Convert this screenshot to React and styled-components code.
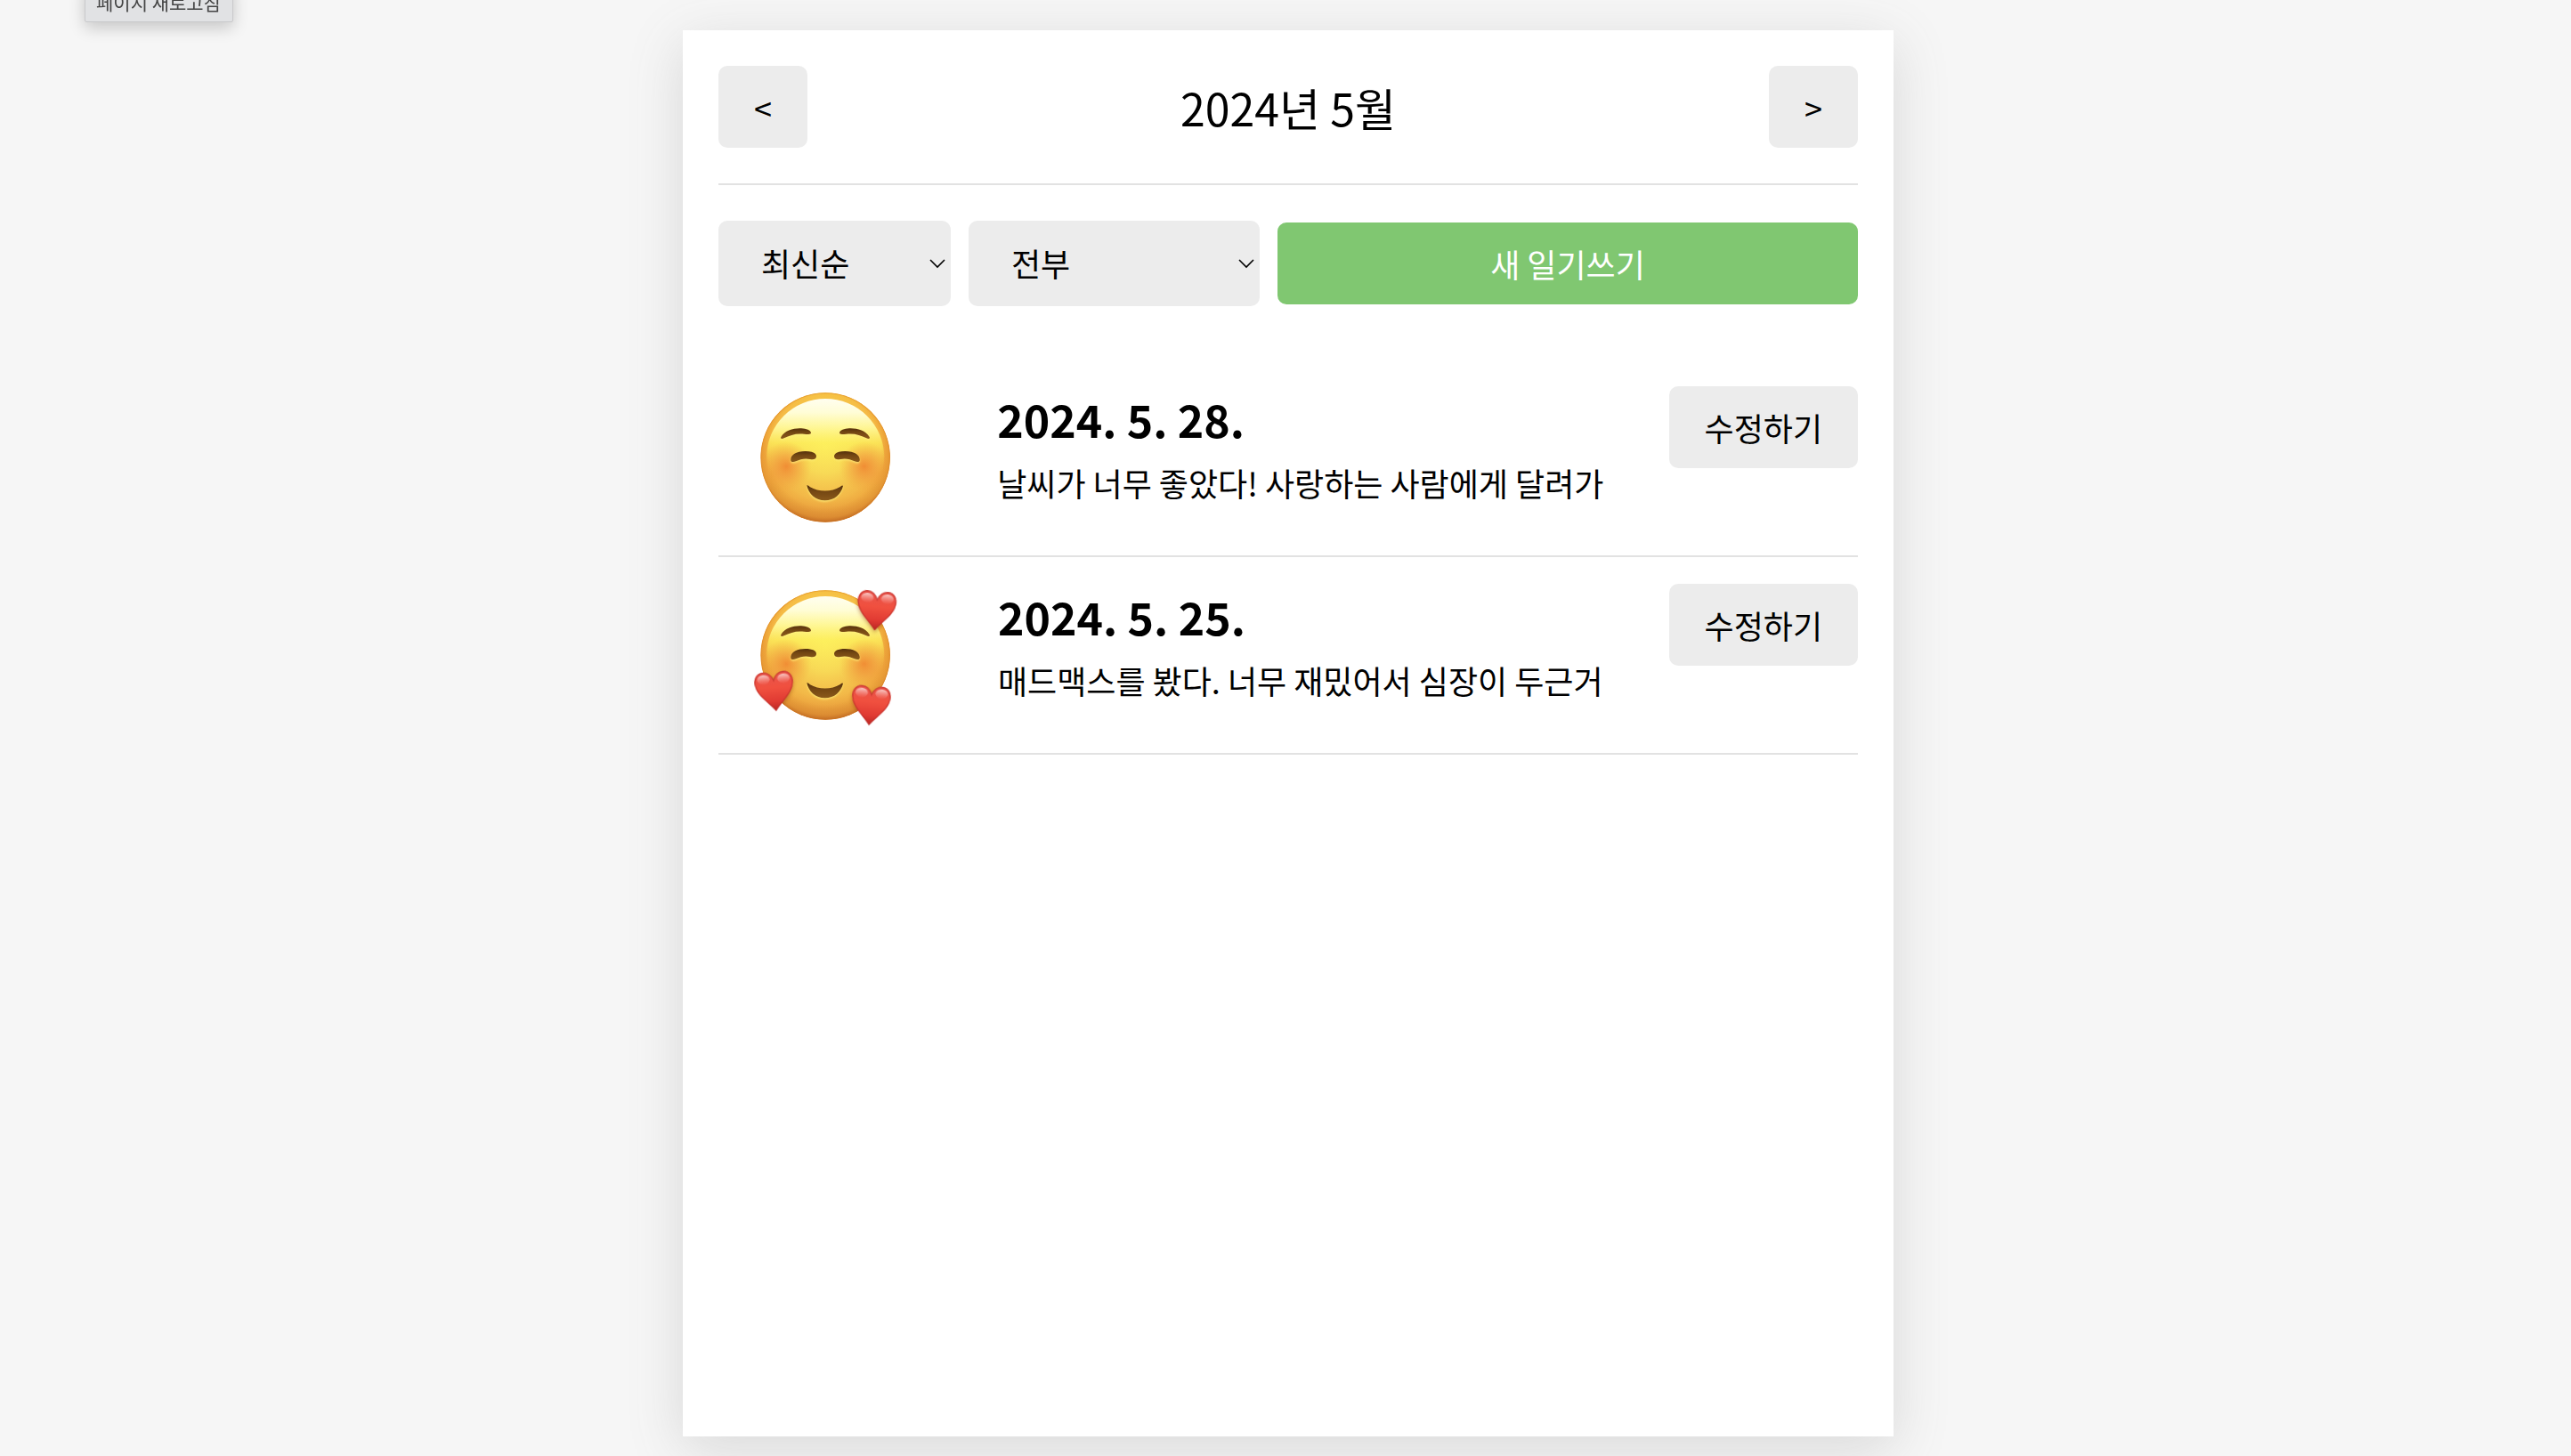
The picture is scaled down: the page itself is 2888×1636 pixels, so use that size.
import React from "react";
import styled, { createGlobalStyle } from "styled-components";

const GlobalStyle = createGlobalStyle`
  *, *::before, *::after { box-sizing: border-box; }
  body {
    margin: 0;
    background: #f6f6f6;
    color: #000;
    font-family: "Noto Sans CJK KR", "Noto Sans", sans-serif;
    font-size: 36px;
    line-height: 52px;
  }
  button, select { font: inherit; }
`;

const Page = styled.div`
  min-height: 100vh;
  display: flex;
  justify-content: center;
  padding: 34px 0 22px 6px;
`;

const Card = styled.main`
  width: 100%;
  max-width: 1360px;
  padding: 0 40px;
  background: #fff;
  box-shadow: 0 14px 58px rgba(100, 100, 100, 0.2);
`;

const Tooltip = styled.div`
  position: fixed;
  top: -20px;
  left: 95px;
  padding: 6px 13px 7px 12px;
  border: 1px solid #c9c9cb;
  border-radius: 2px;
  background: #e1e2e4;
  box-shadow: 0 6px 18px rgba(0, 0, 0, 0.2);
  color: #444;
  font-size: 21px;
  line-height: 30px;
  white-space: nowrap;
`;

const Header = styled.header`
  display: flex;
  align-items: center;
  justify-content: space-between;
  padding: 40px 0;
  border-bottom: 2px solid #e2e2e2;
`;

const Title = styled.h1`
  margin: 0;
  font-size: 50px;
  font-weight: 400;
  line-height: 72px;
`;

const Button = styled.button`
  flex: ${(p) => (p.$grow ? "1" : "none")};
  padding: 20px 40px;
  border: 0;
  border-radius: 10px;
  background: ${(p) => (p.$positive ? "#80c771" : "#ececec")};
  color: ${(p) => (p.$positive ? "#fff" : "#000")};
  white-space: nowrap;
  cursor: pointer;
`;

const Toolbar = styled.div`
  display: flex;
  align-items: center;
  gap: 20px;
  padding: 40px 0;
`;

const SelectBox = styled.div`
  position: relative;
  flex: none;
  width: ${(p) => p.$width}px;
`;

const Select = styled.select`
  display: block;
  width: 100%;
  padding: 21px 48px 23px;
  border: 0;
  border-radius: 10px;
  background: #ececec;
  color: #000;
  appearance: none;
  cursor: pointer;
`;

const Chevron = styled.svg`
  position: absolute;
  right: 6px;
  top: 50%;
  width: 18px;
  height: 12px;
  margin-top: -6px;
  pointer-events: none;
`;

const List = styled.ul`
  margin: 20px 0 0;
  padding: 0;
  list-style: none;
`;

const Item = styled.li`
  display: flex;
  align-items: flex-start;
  justify-content: space-between;
  padding: 30px 0;
  border-bottom: 2px solid #e2e2e2;
`;

const Face = styled.svg`
  display: block;
  flex: none;
  width: 240px;
  height: 160px;
`;

const Info = styled.div`
  display: grid;
  gap: 10px;
`;

const DateText = styled.div`
  font-size: 50px;
  font-weight: 700;
  line-height: 72px;
`;

const Content = styled.div`
  white-space: nowrap;
`;

const HEART =
  "M0,-38 C6,-56 20,-67 36,-67 C56,-66 67,-48 65,-28 C62,6 30,28 0,66 C-30,28 -62,6 -65,-28 C-67,-48 -56,-66 -36,-67 C-20,-67 -6,-56 0,-38 Z";

function heartPlace({ x, y, angle }) {
  return `translate(${x} ${y}) rotate(${angle})`;
}

function Heart({ id, ...place }) {
  return (
    <g transform={heartPlace(place)}>
      <path d={HEART} fill={`url(#${id}-heart)`} />
      <path d={HEART} fill="none" stroke="#b92a26" strokeWidth="4" opacity="0.6" transform="scale(.97)" />
      <ellipse cx="-34" cy="-42" rx="21" ry="16" fill={`url(#${id}-gloss)`} />
      <ellipse cx="34" cy="-42" rx="21" ry="16" fill={`url(#${id}-gloss)`} />
    </g>
  );
}

const HEARTS = [
  { x: 493, y: 133, angle: 5 },
  { x: 150, y: 405, angle: -5 },
  { x: 474, y: 453, angle: 5 },
];

const BROW =
  "M172,213 C185,191 214,183 240,184 C257,185 272,190 273,199 C273,206 262,204 250,203 C222,200 202,207 182,217 C175,220 169,219 172,213 Z";
const EYE =
  "M205,287 C207,270 228,261 254,261 C278,261 292,268 291,279 C290,289 280,290 270,288 C252,284 237,288 222,295 C210,300 203,296 205,287 Z";
const MOUTH =
  "M259,376 C262,375 266,378 270,382 C298,399 343,399 370,382 C375,378 379,374 381,378 C374,406 352,427 320,427 C288,427 265,405 259,376 Z";

function HalfFace({ id }) {
  return (
    <>
      <circle cx="190" cy="312" r="84" fill={`url(#${id}-cheek)`} />
      <g fill="#fff07a" opacity="0.8" filter={`url(#${id}-soft)`} transform="translate(0 4)">
        <path d={BROW} />
        <path d={EYE} />
      </g>
      <path fill={`url(#${id}-brown)`} d={BROW} />
      <path fill={`url(#${id}-brown)`} d={EYE} />
    </>
  );
}

function Emotion({ id, label, hearts }) {
  return (
    <Face viewBox="-39 42 720 480" role="img" aria-label={label}>
      <defs>
        <linearGradient id={`${id}-base`} x1="0" y1="0" x2="0" y2="1">
          <stop offset="0" stopColor="#fbc52e" />
          <stop offset="0.12" stopColor="#f8b236" />
          <stop offset="0.45" stopColor="#f2a63a" />
          <stop offset="0.8" stopColor="#efab40" />
          <stop offset="1" stopColor="#e2953a" />
        </linearGradient>
        <radialGradient id={`${id}-glow`} gradientUnits="userSpaceOnUse" cx="321" cy="245" r="225">
          <stop offset="0" stopColor="#fdf060" />
          <stop offset="0.4" stopColor="#f8dc58" stopOpacity="0.95" />
          <stop offset="0.8" stopColor="#f4bf4c" stopOpacity="0.7" />
          <stop offset="1" stopColor="#f0ac42" stopOpacity="0" />
        </radialGradient>
        <linearGradient id={`${id}-dome`} x1="0" y1="0" x2="0" y2="1">
          <stop offset="0" stopColor="#fffef0" />
          <stop offset="0.12" stopColor="#fffdd6" />
          <stop offset="0.25" stopColor="#fff898" stopOpacity="0.95" />
          <stop offset="0.38" stopColor="#fdf05c" stopOpacity="0.75" />
          <stop offset="0.65" stopColor="#f8d850" stopOpacity="0" />
        </linearGradient>
        <radialGradient id={`${id}-rim`} gradientUnits="userSpaceOnUse" cx="321" cy="260" r="243">
          <stop offset="0.78" stopColor="#d07c26" stopOpacity="0" />
          <stop offset="0.92" stopColor="#cc7422" stopOpacity="0.35" />
          <stop offset="1" stopColor="#b35a1c" stopOpacity="0.85" />
        </radialGradient>
        <radialGradient id={`${id}-cheek`}>
          <stop offset="0" stopColor="#ef7f2e" stopOpacity="0.8" />
          <stop offset="0.45" stopColor="#f0903a" stopOpacity="0.5" />
          <stop offset="1" stopColor="#f0a03a" stopOpacity="0" />
        </radialGradient>
        <linearGradient id={`${id}-brown`} x1="0" y1="0" x2="0" y2="1">
          <stop offset="0" stopColor="#55300c" />
          <stop offset="0.4" stopColor="#744713" />
          <stop offset="1" stopColor="#8a591b" />
        </linearGradient>
        <linearGradient id={`${id}-heart`} x1="0" y1="0" x2="0" y2="1">
          <stop offset="0" stopColor="#e8544c" />
          <stop offset="0.4" stopColor="#f0503f" />
          <stop offset="0.75" stopColor="#e03a32" />
          <stop offset="1" stopColor="#b92622" />
        </linearGradient>
        <linearGradient id={`${id}-gloss`} x1="0" y1="0" x2="0" y2="1">
          <stop offset="0" stopColor="#fff" stopOpacity="0.7" />
          <stop offset="1" stopColor="#ffb0a8" stopOpacity="0.05" />
        </linearGradient>
        <filter id={`${id}-soft`} x="-20%" y="-20%" width="140%" height="140%">
          <feGaussianBlur stdDeviation="3" />
        </filter>
        <filter id={`${id}-blur`} x="-20%" y="-20%" width="140%" height="140%">
          <feGaussianBlur stdDeviation="6" />
        </filter>
        <clipPath id={`${id}-clip`}>
          <circle cx="321.5" cy="282" r="218.5" />
        </clipPath>
      </defs>
      <g clipPath={`url(#${id}-clip)`}>
        <circle cx="321.5" cy="282" r="219" fill={`url(#${id}-base)`} />
        <circle cx="321.5" cy="282" r="219" fill={`url(#${id}-glow)`} />
        <ellipse cx="321.5" cy="280" rx="198" ry="196" fill={`url(#${id}-dome)`} />
        <circle cx="321.5" cy="282" r="219" fill={`url(#${id}-rim)`} />
        <circle cx="321.5" cy="282" r="217" fill="none" stroke="#d97c20" strokeWidth="4" opacity="0.4" />
      </g>
      <HalfFace id={id} />
      <g transform="translate(642 0) scale(-1 1)">
        <HalfFace id={id} />
      </g>
      <path d={MOUTH} fill="#fff07a" opacity="0.8" filter={`url(#${id}-soft)`} transform="translate(0 4)" />
      <path d={MOUTH} fill={`url(#${id}-brown)`} />
      {hearts && (
        <>
          <g clipPath={`url(#${id}-clip)`} fill="#9a4a12" opacity="0.5">
            {HEARTS.map((h) => (
              <path
                key={h.x}
                d={HEART}
                filter={`url(#${id}-blur)`}
                transform={heartPlace({ ...h, y: h.y + 8 })}
              />
            ))}
          </g>
          {HEARTS.map((h) => (
            <Heart key={h.x} id={id} {...h} />
          ))}
        </>
      )}
    </Face>
  );
}

function Dropdown({ label, width, options }) {
  return (
    <SelectBox $width={width}>
      <Select aria-label={label}>
        {options.map((o) => (
          <option key={o}>{o}</option>
        ))}
      </Select>
      <Chevron viewBox="0 0 18 12" aria-hidden="true">
        <path d="M1 2 L9 10 L17 2" fill="none" stroke="#000" strokeWidth="1.6" />
      </Chevron>
    </SelectBox>
  );
}

const DIARY = [
  { id: "smile", label: "미소", date: "2024. 5. 28.", text: "날씨가 너무 좋았다! 사랑하는 사람에게 달려가", hearts: false },
  { id: "love", label: "사랑", date: "2024. 5. 25.", text: "매드맥스를 봤다. 너무 재밌어서 심장이 두근거", hearts: true },
];

export default function App() {
  return (
    <>
      <GlobalStyle />
      <Tooltip role="tooltip">페이지 새로고침</Tooltip>
      <Page>
        <Card>
          <Header>
            <Button>{"<"}</Button>
            <Title>2024년 5월</Title>
            <Button>{">"}</Button>
          </Header>
          <Toolbar>
            <Dropdown label="정렬" width={261} options={["최신순", "오래된 순"]} />
            <Dropdown label="감정" width={327} options={["전부", "좋은 감정만"]} />
            <Button $positive $grow>새 일기쓰기</Button>
          </Toolbar>
          <List>
            {DIARY.map((d) => (
              <Item key={d.id}>
                <Emotion id={d.id} label={d.label} hearts={d.hearts} />
                <Info>
                  <DateText>{d.date}</DateText>
                  <Content>{d.text}</Content>
                </Info>
                <Button>수정하기</Button>
              </Item>
            ))}
          </List>
        </Card>
      </Page>
    </>
  );
}
